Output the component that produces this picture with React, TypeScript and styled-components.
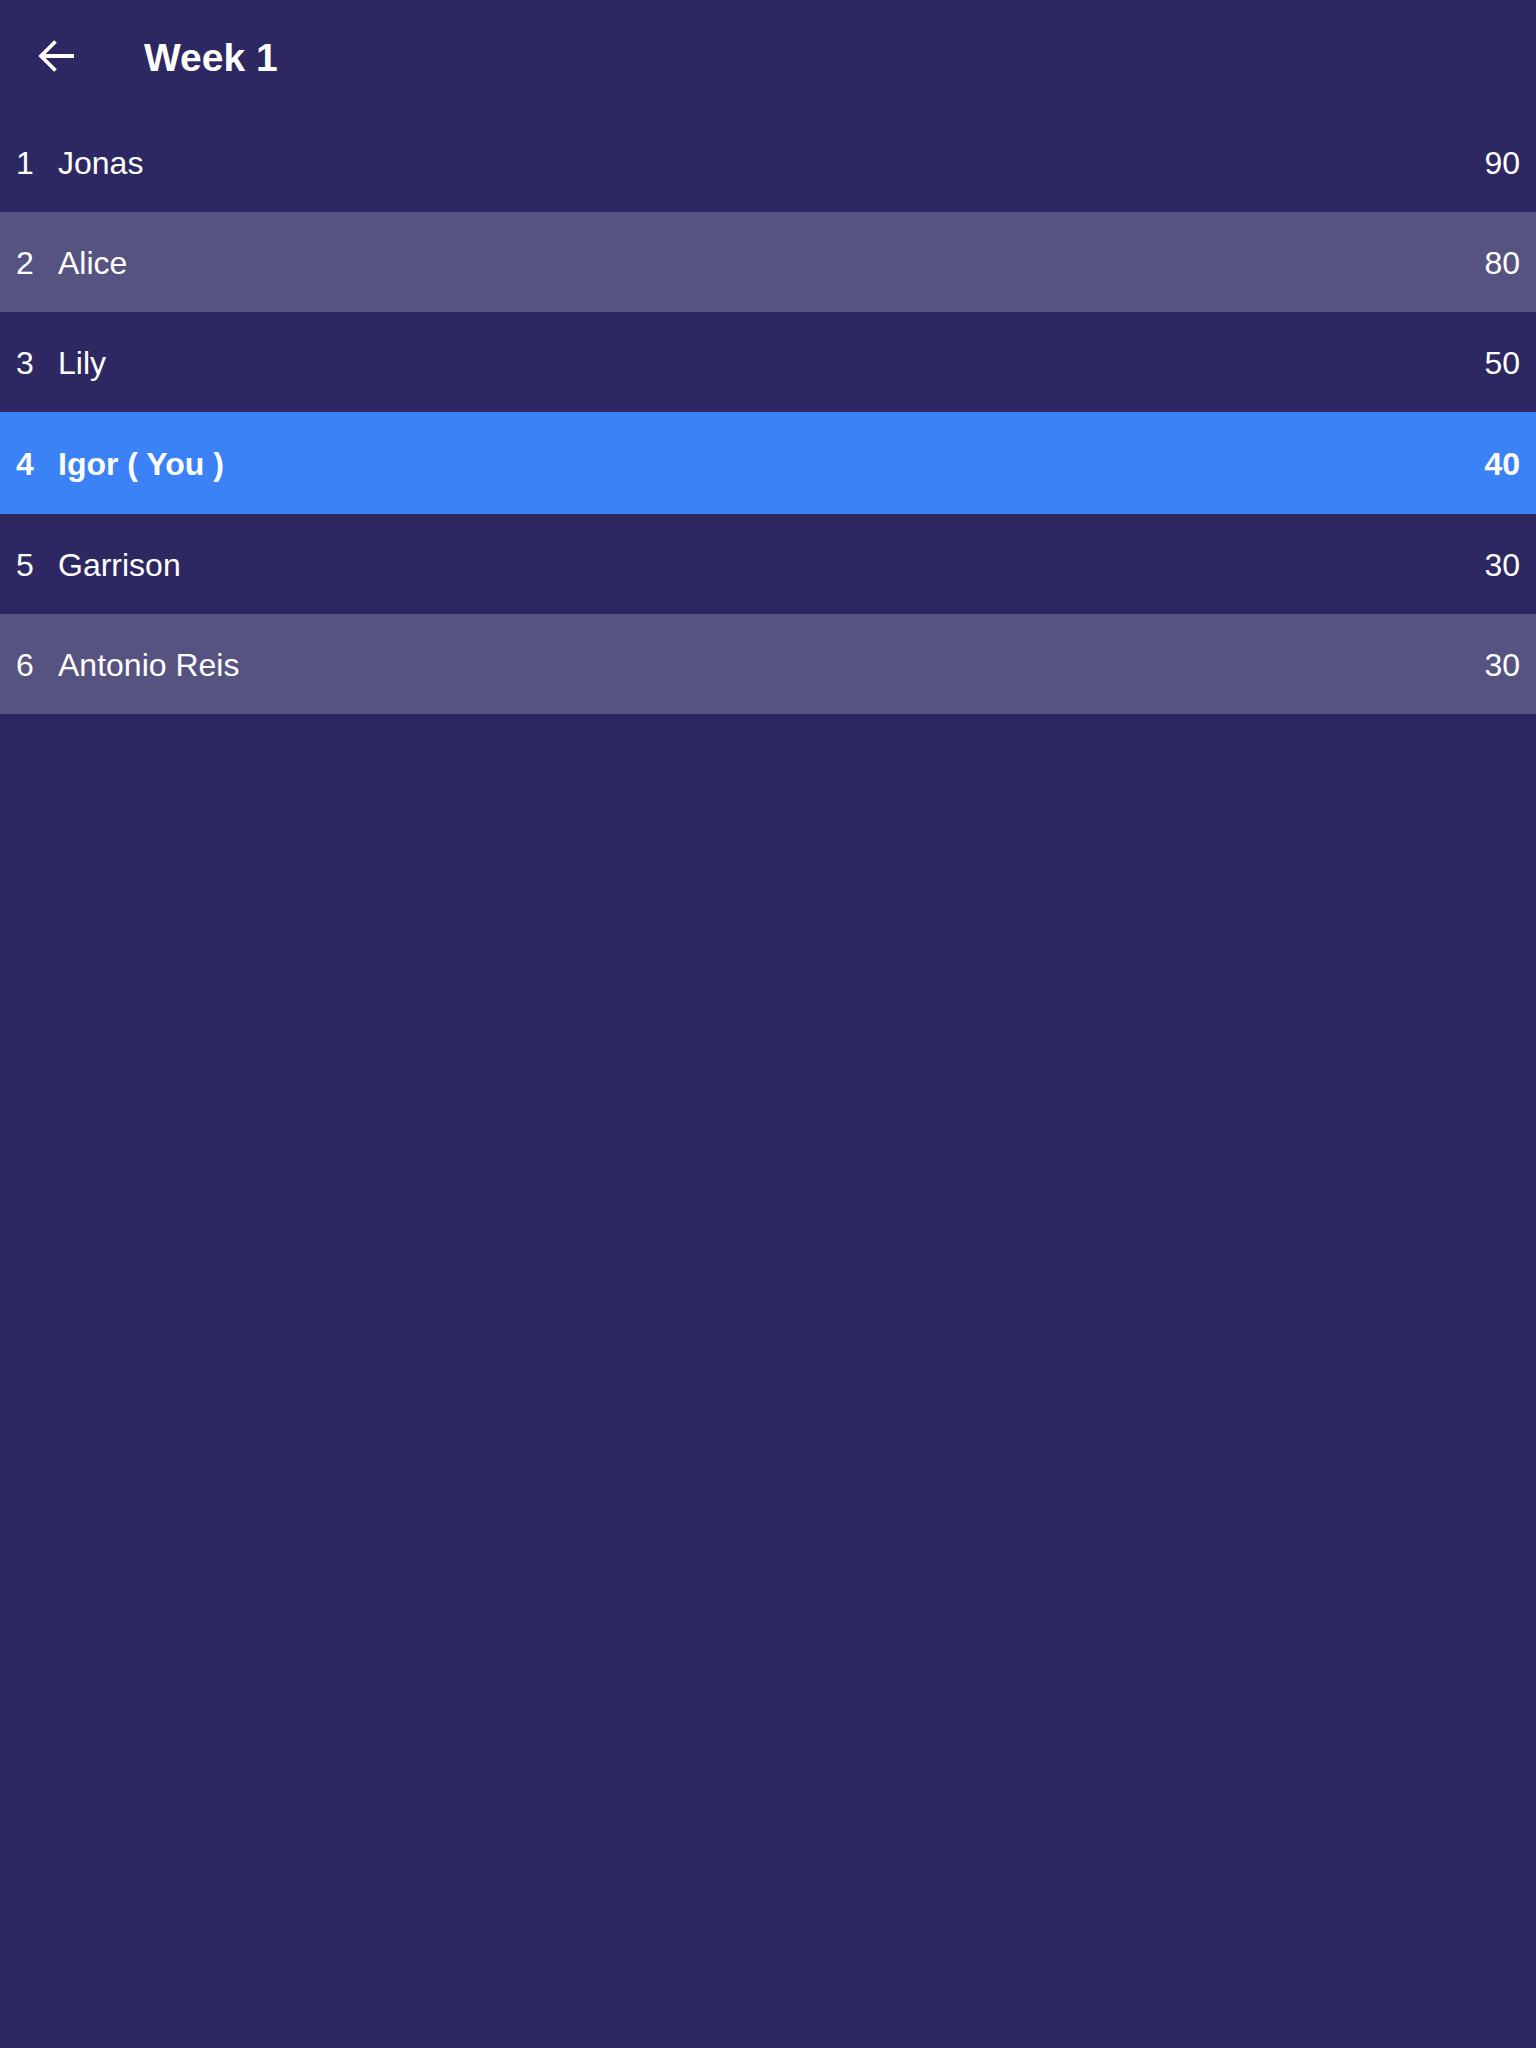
import React from "react";
import styled, { createGlobalStyle } from "styled-components";

const GlobalStyle = createGlobalStyle`
  html, body {
    margin: 0;
    padding: 0;
    background: #2d2862;
  }
  body {
    font-family: "Liberation Sans", Arial, Helvetica, sans-serif;
    color: #ffffff;
  }
`;

const Page = styled.div`
  width: 1536px;
  min-height: 2048px;
  background: #2d2862;
  display: flex;
  flex-direction: column;
`;

const Header = styled.header`
  height: 112px;
  display: flex;
  align-items: center;
  padding-left: 36px;
  box-sizing: border-box;
`;

const BackButton = styled.button`
  width: 40px;
  height: 40px;
  padding: 0;
  margin: 0 68px 0 0;
  border: none;
  background: transparent;
  display: flex;
  align-items: center;
  justify-content: center;
  cursor: pointer;
`;

const Title = styled.h1`
  margin: 0;
  font-size: 39px;
  font-weight: 700;
  color: #ffffff;
  line-height: 1;
  padding-top: 3px;
`;

const List = styled.div`
  display: flex;
  flex-direction: column;
`;

const Row = styled.div<{ $striped?: boolean; $me?: boolean }>`
  height: ${(p) => (p.$me ? "102px" : "100px")};
  display: flex;
  align-items: center;
  padding: 2px 16px 0 16px;
  box-sizing: border-box;
  background: ${(p) =>
    p.$me ? "#3b82f6" : p.$striped ? "rgba(255,255,255,0.2)" : "transparent"};
  font-size: 32px;
  font-weight: ${(p) => (p.$me ? 700 : 400)};
  color: #ffffff;
`;

const Rank = styled.span`
  width: 42px;
  flex: none;
`;

const Name = styled.span`
  flex: 1;
`;

const Score = styled.span`
  flex: none;
  text-align: right;
`;

const players = [
  { rank: 1, name: "Jonas", score: 90 },
  { rank: 2, name: "Alice", score: 80 },
  { rank: 3, name: "Lily", score: 50 },
  { rank: 4, name: "Igor ( You )", score: 40, me: true },
  { rank: 5, name: "Garrison", score: 30 },
  { rank: 6, name: "Antonio Reis", score: 30 },
];

export default function App() {
  return (
    <Page>
      <GlobalStyle />
      <Header>
        <BackButton aria-label="Back">
          <svg width="38" height="34" viewBox="0 0 38 34" fill="none">
            <path
              d="M37 17H4M18.5 2.5L4 17l14.5 14.5"
              stroke="#ffffff"
              strokeWidth="3.8"
              strokeLinecap="butt"
              strokeLinejoin="miter"
            />
          </svg>
        </BackButton>
        <Title>Week 1</Title>
      </Header>
      <List>
        {players.map((p) => (
          <Row key={p.rank} $striped={p.rank % 4 === 2} $me={p.me}>
            <Rank>{p.rank}</Rank>
            <Name>{p.name}</Name>
            <Score>{p.score}</Score>
          </Row>
        ))}
      </List>
    </Page>
  );
}
